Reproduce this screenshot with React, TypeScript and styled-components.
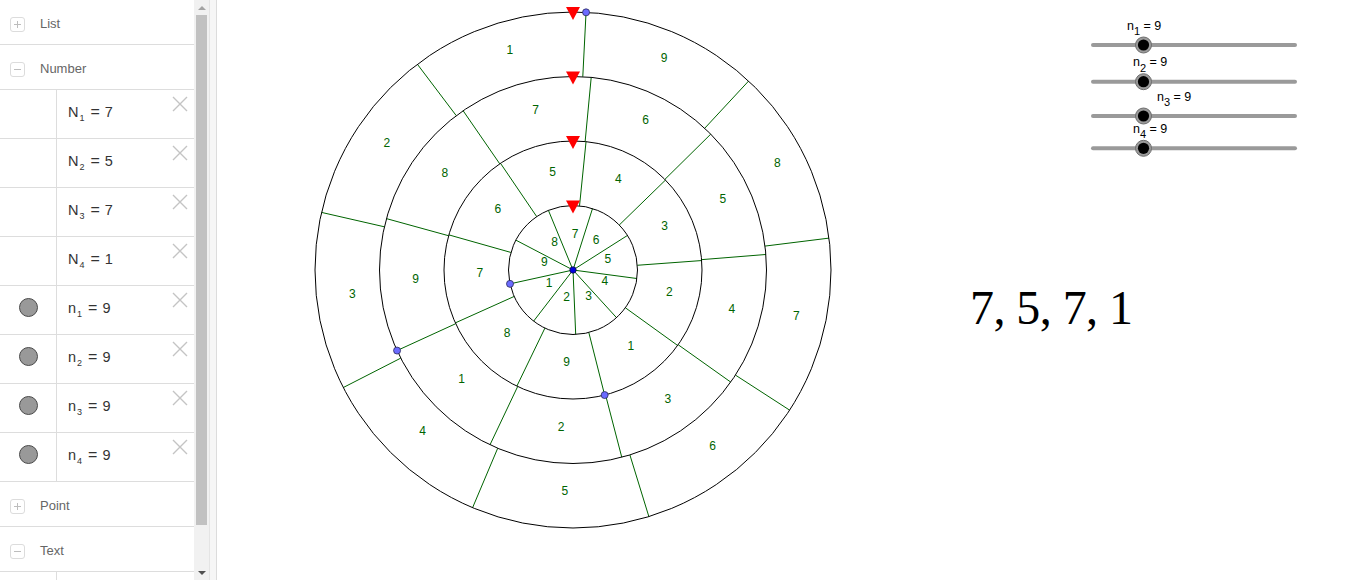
import styled, { createGlobalStyle } from "styled-components";

const GlobalStyle = createGlobalStyle`
  html, body {
    margin: 0;
    padding: 0;
    overflow: hidden;
    background: white;
  }
  body {
    font-family: "Liberation Sans", Arial, sans-serif;
  }
`;

const Page = styled.div`
  display: flex;
  width: 1366px;
  height: 580px;
`;

const AlgebraView = styled.div`
  display: flex;
  flex: none;
  width: 209px;
  height: 580px;
`;

const AlgebraList = styled.div`
  display: flex;
  flex-direction: column;
  width: 194px;
  height: 580px;
  overflow: hidden;
`;

const HeaderRow = styled.div`
  display: flex;
  align-items: flex-start;
  flex: none;
  height: 45px;
  padding: 17px 0 0 10px;
  box-sizing: border-box;
  border-bottom: 1px solid #dddddd;
`;

const ToggleBox = styled.div`
  display: flex;
  align-items: center;
  justify-content: center;
  width: 15px;
  height: 15px;
  box-sizing: border-box;
  border: 1px solid #dcdcdc;
  border-radius: 3px;
`;

const HeaderLabel = styled.span`
  margin-left: 15px;
  font-size: 13px;
  line-height: 13px;
  color: #666666;
`;

const ItemRow = styled.div`
  display: flex;
  flex: none;
  height: 48px;
  border-bottom: 1px solid #dddddd;
`;

const MarbleCell = styled.div`
  display: flex;
  justify-content: center;
  flex: none;
  width: 56px;
  border-right: 1px solid #dddddd;
`;

const Marble = styled.div`
  width: 19px;
  height: 19px;
  margin-top: 12px;
  box-sizing: border-box;
  border-radius: 50%;
  background: #999999;
  border: 1px solid #4a4a4a;
`;

const ValueCell = styled.div`
  flex: 1;
  padding: 12px 0 0 11px;
  font-size: 14.5px;
  line-height: 20px;
  color: #333333;
  white-space: nowrap;
`;

const Sub = styled.sub`
  font-size: 9px;
  vertical-align: -4px;
  line-height: 0;
  margin-left: 1px;
`;

const Eq = styled.span`
  display: inline-block;
  margin: 0 5px 0 6px;
  font-size: 16px;
`;

const DeleteButton = styled.div`
  flex: none;
  width: 16px;
  height: 16px;
  margin: 6px 6px 0 0;
`;

const Scrollbar = styled.div`
  display: flex;
  flex-direction: column;
  flex: none;
  width: 15px;
  height: 580px;
  background: #f1f1f1;
`;

const ArrowButton = styled.div<{ $down?: boolean; $active?: boolean }>`
  display: flex;
  align-items: center;
  justify-content: center;
  flex: none;
  height: 15px;
  &::after {
    content: "";
    border-left: 4px solid transparent;
    border-right: 4px solid transparent;
    ${(p) =>
      p.$down
        ? `border-top: 4px solid ${p.$active ? "#505050" : "#a3a3a3"};`
        : `border-bottom: 4px solid ${p.$active ? "#505050" : "#a3a3a3"};`}
  }
`;

const Track = styled.div`
  flex: 1;
  padding: 0 2px;
  display: flex;
  flex-direction: column;
`;

const Thumb = styled.div`
  height: 510px;
  background: #c1c1c1;
`;

const Splitter = styled.div`
  flex: none;
  width: 6px;
  background: #f6f6f6;
  border-left: 1px solid #e4e4e4;
  border-right: 1px solid #dcdcdc;
`;

const Graphics = styled.div`
  flex: 1;
  height: 580px;
  background: white;
`;

const Canvas = styled.svg`
  display: block;
  width: 100%;
  height: 100%;
`;

function Sign({ minus }: { minus?: boolean }) {
  return (
    <svg width="9" height="9" viewBox="0 0 9 9">
      <line x1="1" y1="4.5" x2="8" y2="4.5" stroke="#bdbdbd" strokeWidth="1" />
      {!minus && (
        <line x1="4.5" y1="1" x2="4.5" y2="8" stroke="#bdbdbd" strokeWidth="1" />
      )}
    </svg>
  );
}

function CloseIcon() {
  return (
    <svg width="16" height="16" viewBox="0 0 16 16">
      <path d="M1 1 L15 15 M15 1 L1 15" stroke="#c4c4c4" strokeWidth="1.4" />
    </svg>
  );
}

const items = [
  { name: "N", sub: "1", value: 7, marble: false },
  { name: "N", sub: "2", value: 5, marble: false },
  { name: "N", sub: "3", value: 7, marble: false },
  { name: "N", sub: "4", value: 1, marble: false },
  { name: "n", sub: "1", value: 9, marble: true },
  { name: "n", sub: "2", value: 9, marble: true },
  { name: "n", sub: "3", value: 9, marble: true },
  { name: "n", sub: "4", value: 9, marble: true },
];

// wheel geometry (page coordinates, the svg viewBox starts at x=217)
const CX = 573;
const CY = 270;
const U = 64.5;
const rings = [
  { k: 1, start: 192.4 },
  { k: 2, start: 284.2 },
  { k: 3, start: 204.6 },
  { k: 4, start: 87.1 },
];

const pt = (r: number, deg: number) => {
  const a = (deg * Math.PI) / 180;
  return [CX + r * Math.cos(a), CY - r * Math.sin(a)];
};

const sliders = [
  { y: 45, lx: 1127, ly: 29.5, sub: "1" },
  { y: 81.7, lx: 1133, ly: 66, sub: "2" },
  { y: 116, lx: 1157, ly: 100.7, sub: "3" },
  { y: 148.3, lx: 1133, ly: 132.7, sub: "4" },
];

function Wheel() {
  return (
    <g>
      {rings.map((ring) =>
        Array.from({ length: 9 }, (_, j) => {
          const deg = ring.start + 40 * j;
          const [x1, y1] = pt(U * (ring.k - 1), deg);
          const [x2, y2] = pt(U * ring.k, deg);
          return (
            <line
              key={`s${ring.k}-${j}`}
              x1={x1}
              y1={y1}
              x2={x2}
              y2={y2}
              stroke="#006400"
              strokeWidth="1"
            />
          );
        })
      )}
      {rings.map((ring) => (
        <circle
          key={`c${ring.k}`}
          cx={CX}
          cy={CY}
          r={U * ring.k}
          fill="none"
          stroke="#000"
          strokeWidth="1"
        />
      ))}
      {rings.map((ring) =>
        Array.from({ length: 9 }, (_, j) => {
          const [x, y] = pt(U * (ring.k - 0.5), ring.start + 20 + 40 * j);
          return (
            <text
              key={`t${ring.k}-${j}`}
              x={x}
              y={y}
              fontFamily="'Liberation Sans', Arial, sans-serif"
              fontSize="12"
              fill="#006400"
            >
              {j + 1}
            </text>
          );
        })
      )}
      {rings.map((ring) => {
        const [x, y] = pt(U * ring.k, ring.start);
        return (
          <circle
            key={`p${ring.k}`}
            cx={x}
            cy={y}
            r="3.5"
            fill="#6b6bff"
            stroke="#2a2a5a"
            strokeWidth="0.8"
          />
        );
      })}
      <circle cx={CX} cy={CY} r="3.2" fill="#0000e0" stroke="#101040" strokeWidth="0.8" />
      {rings.map((ring) => {
        const top = CY - U * ring.k;
        return (
          <polygon
            key={`r${ring.k}`}
            points={`${CX - 7},${top - 5} ${CX + 7},${top - 5} ${CX},${top + 8}`}
            fill="#ff0000"
          />
        );
      })}
    </g>
  );
}

function Sliders() {
  return (
    <g fontFamily="'Liberation Sans', Arial, sans-serif" fill="#000">
      {sliders.map((s) => (
        <g key={s.sub}>
          <line
            x1="1093"
            y1={s.y}
            x2="1295"
            y2={s.y}
            stroke="#9a9a9a"
            strokeWidth="4"
            strokeLinecap="round"
          />
          <circle cx="1143.5" cy={s.y} r="8" fill="#9a9a9a" stroke="#6e6e6e" strokeWidth="1" />
          <circle cx="1143.5" cy={s.y} r="5.6" fill="#000" />
          <text x={s.lx} y={s.ly} fontSize="12.5">
            n
            <tspan dy="5.5" fontSize="11">
              {s.sub}
            </tspan>
            <tspan dy="-5.5"> = 9</tspan>
          </text>
        </g>
      ))}
    </g>
  );
}

export default function App() {
  return (
    <Page>
      <GlobalStyle />
      <AlgebraView>
        <AlgebraList>
          <HeaderRow>
            <ToggleBox>
              <Sign />
            </ToggleBox>
            <HeaderLabel>List</HeaderLabel>
          </HeaderRow>
          <HeaderRow>
            <ToggleBox>
              <Sign minus />
            </ToggleBox>
            <HeaderLabel>Number</HeaderLabel>
          </HeaderRow>
          {items.map((it) => (
            <ItemRow key={it.name + it.sub}>
              <MarbleCell>{it.marble && <Marble />}</MarbleCell>
              <ValueCell>
                {it.name}
                <Sub>{it.sub}</Sub>
                <Eq>=</Eq>
                {it.value}
              </ValueCell>
              <DeleteButton>
                <CloseIcon />
              </DeleteButton>
            </ItemRow>
          ))}
          <HeaderRow>
            <ToggleBox>
              <Sign />
            </ToggleBox>
            <HeaderLabel>Point</HeaderLabel>
          </HeaderRow>
          <HeaderRow>
            <ToggleBox>
              <Sign minus />
            </ToggleBox>
            <HeaderLabel>Text</HeaderLabel>
          </HeaderRow>
          <ItemRow>
            <MarbleCell />
          </ItemRow>
        </AlgebraList>
        <Scrollbar>
          <ArrowButton />
          <Track>
            <Thumb />
          </Track>
          <ArrowButton $down $active />
        </Scrollbar>
      </AlgebraView>
      <Splitter />
      <Graphics>
        <Canvas viewBox="217 0 1149 580" preserveAspectRatio="xMinYMin meet">
          <Wheel />
          <Sliders />
          <text
            x="970"
            y="323.5"
            fontFamily="'Liberation Serif', 'Times New Roman', serif"
            fontSize="48"
            textLength="163"
            lengthAdjust="spacing"
          >
            7, 5, 7, 1
          </text>
        </Canvas>
      </Graphics>
    </Page>
  );
}
